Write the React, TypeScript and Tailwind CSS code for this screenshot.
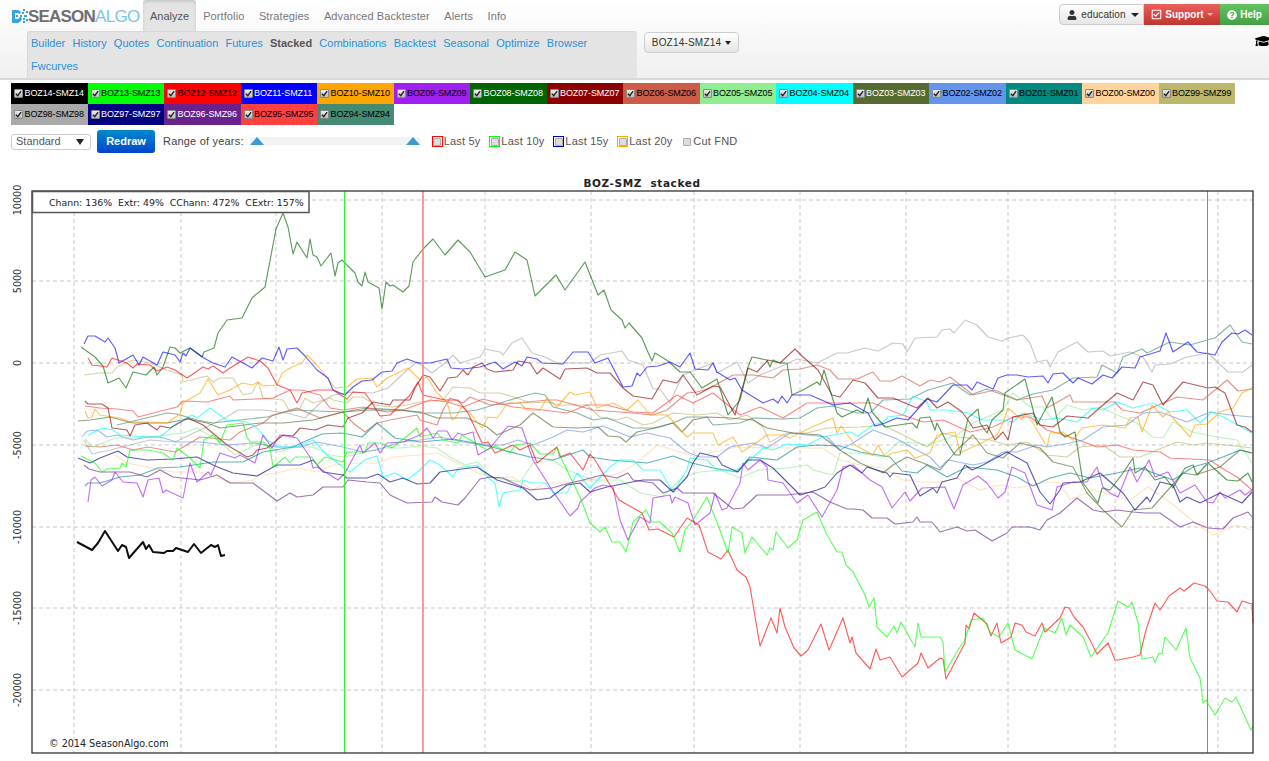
import React from 'react';
import { FaUser, FaRegCheckSquare, FaQuestionCircle, FaGraduationCap } from 'react-icons/fa';

const mainTabs = ['Portfolio', 'Strategies', 'Advanced Backtester', 'Alerts', 'Info'];
const subLinks = ['Builder', 'History', 'Quotes', 'Continuation', 'Futures', 'Stacked', 'Combinations', 'Backtest', 'Seasonal', 'Optimize', 'Browser', 'Fwcurves'];

const legend = [
  { name: 'BOZ14-SMZ14', bg: 'bg-[#000000]', text: 'text-white' },
  { name: 'BOZ13-SMZ13', bg: 'bg-[#00ff00]', text: 'text-black' },
  { name: 'BOZ12-SMZ12', bg: 'bg-[#ff0000]', text: 'text-black' },
  { name: 'BOZ11-SMZ11', bg: 'bg-[#0000ff]', text: 'text-white' },
  { name: 'BOZ10-SMZ10', bg: 'bg-[#ffa500]', text: 'text-black' },
  { name: 'BOZ09-SMZ09', bg: 'bg-[#a020f0]', text: 'text-black' },
  { name: 'BOZ08-SMZ08', bg: 'bg-[#006400]', text: 'text-white' },
  { name: 'BOZ07-SMZ07', bg: 'bg-[#8b0000]', text: 'text-white' },
  { name: 'BOZ06-SMZ06', bg: 'bg-[#cd5b45]', text: 'text-black' },
  { name: 'BOZ05-SMZ05', bg: 'bg-[#90ee90]', text: 'text-black' },
  { name: 'BOZ04-SMZ04', bg: 'bg-[#00ffff]', text: 'text-black' },
  { name: 'BOZ03-SMZ03', bg: 'bg-[#556b2f]', text: 'text-white' },
  { name: 'BOZ02-SMZ02', bg: 'bg-[#6495ed]', text: 'text-black' },
  { name: 'BOZ01-SMZ01', bg: 'bg-[#008b80]', text: 'text-black' },
  { name: 'BOZ00-SMZ00', bg: 'bg-[#ffd39b]', text: 'text-black' },
  { name: 'BOZ99-SMZ99', bg: 'bg-[#bdb76b]', text: 'text-black' },
  { name: 'BOZ98-SMZ98', bg: 'bg-[#a9a9a9]', text: 'text-black' },
  { name: 'BOZ97-SMZ97', bg: 'bg-[#000080]', text: 'text-white' },
  { name: 'BOZ96-SMZ96', bg: 'bg-[#68228b]', text: 'text-white' },
  { name: 'BOZ95-SMZ95', bg: 'bg-[#ff4040]', text: 'text-black' },
  { name: 'BOZ94-SMZ94', bg: 'bg-[#458b74]', text: 'text-black' },
];

const periods = [
  { label: 'Last 5y', box: 'border-[#ff0000]' },
  { label: 'Last 10y', box: 'border-[#00ff00]' },
  { label: 'Last 15y', box: 'border-[#0000cc]' },
  { label: 'Last 20y', box: 'border-[#ffa500]' },
  { label: 'Cut FND', box: 'border-transparent' },
];

const gridY = [200, 281, 363, 445, 527, 608, 690];
const gridX = [74, 181, 276, 382, 485, 591, 694, 800, 906, 1008, 1115, 1218];
const yLabels = [
  { v: '10000', y: 200 }, { v: '5000', y: 281 }, { v: '0', y: 363 }, { v: '-5000', y: 445 },
  { v: '-10000', y: 527 }, { v: '-15000', y: 608 }, { v: '-20000', y: 690 },
];

// traced by eye from the plot, absolute page coords
const series: { color: string; width?: number; pts: string }[] = [
  { color: '#ffd39b', pts: '115,455 127,463 147,467 173,472 200,472 217,478 233,483 253,480 260,475 277,473 297,468 317,472 333,465 363,463 377,463 393,457 420,455 437,453 457,463 478,473 495,478 513,477 533,490 545,483 567,483 590,480 620,473 637,463 657,445 680,452 697,457 713,452 737,447 767,448 787,448 823,448 840,460 860,465 883,468 903,480 923,482 940,482 957,478 980,490 1000,485 1017,488 1047,482 1060,483 1070,500 1093,490 1130,500 1148,487 1167,500 1180,510 1195,523 1213,535 1237,525 1252,530' },
  { color: '#a9a9a9', pts: '84,440 92,454 110,450 130,445 150,440 175,442 200,430 225,418 238,410 263,410 287,413 305,418 320,403 333,395 353,392 373,393 388,388 407,370 417,362 432,373 445,363 453,355 460,363 480,357 485,349 500,352 503,355 512,343 522,338 532,353 545,357 557,363 590,363 600,355 622,351 628,360 643,365 653,389 660,389 670,403 677,387 683,375 713,363 717,373 737,362 748,383 760,375 780,367 797,359 817,363 837,353 847,353 865,348 878,351 893,343 903,344 907,352 915,338 937,337 942,330 950,329 954,333 965,320 977,325 988,337 1002,341 1008,338 1023,335 1030,343 1037,362 1047,360 1050,367 1058,352 1077,342 1088,352 1103,351 1110,356 1130,352 1143,357 1152,372 1155,365 1170,364 1187,357 1208,353 1228,372 1243,372 1252,365' },
  { color: '#bdb76b', pts: '84,375 100,373 112,373 117,367 133,360 150,363 167,370 182,375 183,382 207,376 213,382 220,378 233,378 243,395 252,393 258,382 263,398 283,400 290,412 300,408 305,398 313,403 330,398 333,400 347,403 353,397 363,397 375,405 392,407 407,405 420,402 443,400 453,387 470,388 480,393 500,393 517,398 530,403 547,402 560,405 587,405 600,417 617,420 627,417 643,425 653,423 673,413 697,415 717,413 730,420 747,415 763,427 770,442 787,433 807,433 827,428 860,427 883,425 907,437 927,447 943,433 957,437 990,440 1007,445 1027,442 1047,455 1067,457 1080,447 1103,445 1120,457 1140,457 1157,450 1177,442 1193,445 1207,443 1252,448' },
  { color: '#458b74', pts: '117,425 167,413 177,414 197,420 213,423 267,417 293,410 343,412 367,408 400,410 420,413 453,413 477,410 520,397 535,393 545,395 553,407 577,413 593,420 607,418 633,428 653,428 673,423 687,417 707,417 713,425 740,423 753,418 783,419 800,418 817,408 833,406 857,413 870,413 883,400 910,399 928,390 953,383 970,395 987,389 1017,400 1033,394 1053,390 1073,378 1097,377 1102,365 1117,373 1123,357 1142,349 1147,353 1170,342 1190,345 1207,340 1215,338 1230,325 1242,342 1252,344' },
  { color: '#cd5b45', pts: '85,446 100,447 117,445 133,450 148,447 175,452 200,437 230,440 240,432 263,423 273,415 297,408 320,418 343,412 353,423 365,432 377,423 390,420 417,415 420,420 437,425 443,410 450,398 463,403 470,397 490,405 517,403 548,400 557,400 593,410 633,413 653,415 667,410 687,393 697,392 710,388 733,375 753,375 773,378 783,370 800,369 817,365 830,370 838,379 857,379 873,372 880,381 892,381 902,376 920,386 930,380 940,382 950,377 973,395 995,390 1017,400 1042,396 1047,408 1070,395 1073,402 1115,402 1122,410 1140,413 1177,397 1203,400 1227,380 1238,391 1252,389' },
  { color: '#ff4040', pts: '85,406 100,408 117,409 133,411 138,417 157,412 177,407 183,401 207,402 230,396 233,400 257,399 273,398 290,390 302,390 320,395 330,408 343,410 363,407 387,412 403,410 430,400 448,402 463,407 483,399 513,407 543,410 567,413 587,405 607,405 633,412 653,413 677,395 693,403 713,393 740,415 760,407 783,418 807,403 837,403 873,403 897,413 923,422 943,420 970,432 993,427 1013,417 1030,417 1047,430 1073,438 1097,447 1117,445 1133,450 1160,452 1170,458 1210,460 1220,467 1237,477 1252,490' },
  { color: '#90ee90', pts: '85,439 93,447 115,438 133,438 147,437 167,435 183,433 197,428 220,442 235,455 260,443 280,452 293,447 313,447 330,455 343,457 363,453 380,448 400,448 420,446 437,448 450,457 465,465 478,462 490,477 520,482 533,463 553,460 567,470 593,480 620,480 640,493 662,497 683,477 700,472 720,470 740,478 758,470 787,468 807,465 813,470 833,475 840,453 857,453 883,457 898,442 917,443 928,445 957,435 973,423 1003,410 1013,393 1030,407 1043,407 1053,420 1067,405 1083,410 1100,407 1117,415 1137,423 1152,437 1163,438 1173,422 1193,432 1217,437 1237,440 1252,463' },
  { color: '#6495ed', pts: '82,437 87,431 97,430 107,437 117,435 133,440 147,437 160,437 177,442 200,442 227,445 253,443 277,447 300,447 317,442 343,447 363,452 377,450 400,442 420,440 440,437 463,442 483,445 503,445 518,440 533,445 553,437 567,430 583,432 603,426 630,437 647,433 670,438 687,452 700,457 717,457 730,447 753,443 767,448 790,433 807,435 827,437 840,450 853,443 873,430 895,438 913,448 930,457 940,468 948,460 973,465 987,462 1003,452 1017,452 1037,445 1047,447 1070,443 1083,440 1103,427 1127,425 1143,413 1160,412 1187,422 1210,412 1230,415 1252,417' },
  { color: '#008b8b', pts: '85,486 88,483 100,483 120,477 140,475 158,468 180,467 213,462 243,462 263,452 293,447 308,440 322,434 342,433 362,437 377,423 395,438 420,442 453,439 480,444 503,450 530,457 553,460 583,450 590,457 610,460 647,463 673,456 692,463 713,468 737,472 750,457 777,460 797,447 817,445 840,446 860,452 890,457 902,471 917,473 927,465 947,477 967,467 997,470 1017,477 1033,486 1050,478 1070,473 1090,478 1117,473 1140,468 1173,480 1193,467 1207,463 1223,457 1240,450 1252,453' },
  { color: '#556b2f', pts: '78,421 90,420 110,417 133,423 167,423 187,419 207,423 220,428 260,423 283,423 313,420 343,412 367,410 400,410 420,412 437,418 467,418 487,427 497,435 520,425 533,413 553,427 577,428 598,427 608,436 620,437 626,442 637,432 660,427 673,423 682,432 693,420 707,417 730,418 753,420 767,428 793,433 820,435 840,450 860,463 883,473 893,465 907,457 923,463 940,470 957,450 973,435 987,453 1003,458 1020,443 1040,448 1053,462 1073,467 1087,493 1103,510 1122,527 1133,510 1152,508 1183,473 1195,475 1220,467 1240,450 1252,453' },
  { color: '#00ffff', pts: '88,435 102,428 113,430 120,435 147,437 160,437 177,423 192,415 197,418 210,408 227,420 247,422 257,428 267,440 278,447 297,447 313,440 327,455 343,467 350,472 365,460 377,456 383,477 395,473 407,480 420,470 430,460 440,465 453,477 458,468 478,465 488,478 495,483 499,507 503,493 520,490 523,480 532,483 545,483 553,493 567,493 577,473 590,488 610,467 620,460 633,460 643,470 660,470 673,492 687,470 690,458 707,460 717,470 737,470 750,460 763,448 773,450 787,444 807,445 823,437 850,432 858,436 873,425 883,422 888,417 903,415 913,396 927,402 930,410 947,410 968,413 982,420 1003,420 1013,422 1023,413 1043,420 1057,418 1077,422 1093,408 1103,410 1117,402 1133,408 1153,403 1170,412 1187,410 1200,423 1212,412 1223,417 1238,425 1252,433' },
  { color: '#000080', pts: '78,458 90,463 100,458 118,451 127,457 147,460 173,459 197,457 213,465 220,468 233,473 257,476 277,465 300,465 313,460 323,472 343,475 347,478 367,478 378,474 390,482 403,478 417,484 430,483 440,472 477,467 497,480 510,484 523,488 537,500 550,498 567,485 580,483 590,492 607,487 627,483 643,480 660,480 673,492 687,477 693,463 700,453 717,457 722,465 738,472 748,460 760,460 773,468 800,495 817,490 825,487 837,473 850,465 862,473 867,467 887,473 890,477 893,473 910,475 920,496 933,488 937,493 942,482 957,478 965,465 972,470 983,465 1007,452 1027,463 1040,492 1050,504 1060,490 1063,483 1080,482 1100,473 1123,493 1135,510 1147,497 1150,502 1160,482 1173,485 1180,502 1187,497 1200,503 1220,493 1242,503 1252,492' },
  { color: '#68228b', pts: '84,465 89,469 100,472 130,472 147,477 160,470 173,477 200,480 217,475 230,483 253,483 277,501 290,493 297,497 313,495 323,487 343,487 348,480 367,482 380,483 390,495 407,503 432,502 435,497 442,502 458,505 465,498 480,479 490,477 503,478 513,483 530,490 552,488 570,483 583,480 602,475 617,478 628,473 633,480 653,483 663,493 677,488 683,493 713,493 733,509 743,508 757,495 787,495 813,492 830,502 847,509 853,509 863,510 872,518 887,518 895,524 913,522 917,517 920,522 932,522 940,532 957,527 967,531 975,530 992,541 1007,533 1012,527 1030,527 1040,530 1047,520 1060,513 1077,498 1093,510 1103,512 1117,510 1133,512 1145,513 1160,513 1180,527 1193,522 1208,528 1223,529 1233,518 1248,512 1252,517' },
  { color: '#ffa500', pts: '85,411 88,418 92,417 95,409 100,415 120,418 130,422 147,422 167,423 180,414 183,403 200,393 208,379 218,395 230,390 242,383 253,385 258,382 263,386 277,385 282,373 292,367 302,363 307,355 317,365 325,375 335,388 347,387 357,379 372,378 377,387 387,378 408,368 420,380 427,377 437,393 447,402 452,420 455,418 462,407 470,413 482,428 488,417 497,418 508,403 520,403 527,410 540,410 547,398 557,407 570,392 575,395 590,392 597,408 613,403 627,410 638,400 650,415 667,415 687,437 693,433 713,433 718,445 733,437 742,452 757,442 767,435 783,435 790,438 810,428 833,418 837,433 841,426 855,445 873,455 878,445 885,457 893,453 907,450 915,458 930,453 937,435 955,432 960,453 983,442 997,435 1003,423 1008,408 1022,420 1025,413 1033,423 1047,447 1050,433 1063,432 1073,440 1082,428 1103,425 1125,428 1130,418 1138,417 1142,432 1152,405 1163,417 1168,412 1173,418 1190,437 1195,425 1207,424 1220,412 1233,408 1242,393 1252,388' },
  { color: '#a020f0', pts: '88,502 91,480 95,477 102,486 112,480 115,472 123,482 137,483 143,497 148,480 159,478 163,493 166,490 183,498 190,463 197,482 208,472 211,475 220,453 235,458 240,455 255,463 263,435 272,448 280,435 297,438 310,457 313,468 317,467 338,480 345,473 360,445 363,453 375,443 380,453 387,443 403,442 420,435 427,428 433,438 438,431 447,431 452,440 458,433 463,435 473,432 478,455 490,448 508,426 522,428 533,460 552,490 570,516 578,508 580,502 595,488 603,485 613,487 620,520 628,540 640,517 650,523 653,498 670,495 672,503 675,497 688,503 695,525 710,513 715,493 722,510 727,508 740,483 743,463 748,470 760,460 767,467 768,480 783,483 797,503 808,495 822,517 837,490 843,467 853,465 862,473 870,480 882,487 892,508 905,492 910,501 922,488 945,487 954,509 963,485 978,476 987,483 998,498 1005,492 1012,467 1025,473 1037,505 1052,510 1057,487 1073,482 1087,482 1097,467 1103,487 1110,493 1118,497 1130,467 1137,482 1149,460 1155,477 1168,472 1180,493 1195,485 1207,502 1213,503 1220,492 1225,498 1240,490 1245,495 1252,490' },
  { color: '#8b0000', pts: '85,401 88,404 102,404 108,408 112,428 127,430 130,436 135,425 147,423 157,430 160,426 170,428 188,418 203,425 227,445 247,457 253,455 257,450 267,448 283,435 293,436 300,428 315,430 328,425 343,427 348,418 362,413 373,402 390,405 393,400 410,400 415,388 423,375 430,377 440,391 448,378 457,377 463,370 468,375 473,367 482,363 487,369 495,372 513,370 518,361 530,363 537,374 543,368 560,379 565,369 587,368 597,373 610,373 623,388 633,396 652,399 663,380 677,383 683,375 697,395 713,386 720,387 735,415 748,368 757,372 768,360 780,363 795,349 803,357 818,370 832,395 840,397 853,380 865,383 878,398 893,398 917,408 928,398 937,408 948,402 962,412 968,420 973,428 987,425 995,440 1003,432 1008,440 1013,417 1033,413 1040,425 1053,427 1067,416 1088,418 1103,405 1117,393 1133,400 1143,382 1153,385 1163,405 1183,382 1208,388 1215,387 1225,393 1237,425 1245,427 1252,432' },
  { color: '#006400', pts: '81,347 95,357 103,366 108,383 119,378 126,388 133,372 146,375 154,367 157,375 163,367 170,347 175,348 180,353 190,348 202,357 204,352 214,348 218,333 227,320 242,318 252,298 265,287 276,229 283,213 288,227 293,254 297,242 307,258 310,239 313,255 317,257 321,266 331,253 335,276 338,263 342,260 355,273 358,282 362,286 365,272 368,282 379,288 382,309 386,282 390,286 393,285 403,292 409,286 413,262 423,249 433,239 445,255 458,240 470,252 485,277 505,270 515,252 527,260 535,296 556,275 565,290 585,262 598,295 604,290 611,310 622,320 625,328 629,323 642,338 647,350 652,361 655,353 668,361 680,372 690,372 702,388 717,379 728,415 740,400 748,367 752,357 767,360 770,367 773,360 780,363 787,363 792,395 803,390 817,382 820,385 824,370 837,413 842,417 857,410 863,413 868,398 872,412 885,427 912,423 917,428 920,418 930,417 935,430 937,423 947,443 955,455 960,455 968,418 978,409 980,423 987,433 992,420 1003,410 1005,393 1025,379 1037,425 1052,397 1060,432 1065,437 1075,432 1083,483 1098,503 1102,488 1110,490 1123,473 1133,458 1135,473 1145,467 1155,480 1165,477 1173,488 1185,468 1193,465 1197,475 1208,463 1227,480 1238,481 1248,473 1252,482' },
  { color: '#0000ff', pts: '84,344 88,336 95,336 105,342 108,338 115,348 119,363 133,355 139,365 143,357 157,365 163,352 175,355 180,362 183,353 186,356 190,348 204,358 213,363 225,367 232,357 252,368 262,358 273,361 279,347 283,360 287,349 297,348 305,356 317,370 328,378 333,390 345,395 353,387 362,381 372,380 382,372 392,371 397,363 407,359 418,363 430,363 447,359 451,368 463,369 480,367 495,362 503,369 515,362 522,366 527,357 537,359 542,363 563,364 573,352 588,352 595,363 608,358 623,387 632,386 637,373 640,376 647,367 658,366 670,362 680,367 690,353 695,369 708,370 713,363 717,372 730,380 735,378 742,390 763,403 773,399 778,403 782,396 787,403 792,395 810,395 833,405 850,403 868,413 875,426 885,423 897,418 908,420 927,399 937,402 953,385 967,385 972,390 977,382 993,389 998,378 1007,375 1017,375 1028,377 1043,376 1048,383 1053,374 1063,373 1073,383 1078,378 1092,384 1103,375 1112,378 1122,367 1135,368 1140,357 1160,351 1166,333 1173,352 1188,342 1197,352 1210,354 1215,355 1222,342 1232,333 1238,334 1245,330 1252,335' },
  { color: '#ff0000', pts: '88,358 92,365 100,366 107,367 112,358 127,363 133,368 137,364 150,365 157,371 167,367 175,370 187,378 203,367 208,369 213,366 223,373 230,368 248,357 260,361 268,368 277,385 290,390 297,403 302,393 317,390 333,390 347,399 353,392 365,393 372,403 380,416 390,415 410,395 418,382 423,395 445,400 458,400 468,413 482,443 488,442 495,453 513,445 520,450 530,445 537,463 543,458 557,447 560,457 570,453 583,470 590,454 595,460 619,500 642,513 649,530 658,529 674,537 687,518 699,525 708,552 721,559 728,550 737,570 746,577 750,587 760,646 771,618 777,633 780,608 785,627 794,648 801,656 808,650 821,624 829,650 843,618 850,643 852,637 856,653 870,669 876,649 880,660 890,657 902,677 918,663 921,653 928,668 940,658 943,659 946,679 965,643 966,625 969,629 974,613 987,624 991,636 997,623 1001,643 1011,637 1015,623 1022,625 1026,632 1035,636 1042,623 1045,632 1060,618 1065,607 1069,608 1074,617 1083,627 1090,640 1097,654 1108,643 1115,660 1118,660 1133,657 1140,655 1146,630 1155,603 1160,610 1169,596 1180,588 1184,591 1194,583 1205,586 1210,591 1217,601 1228,602 1237,612 1242,601 1252,604 1253,623' },
  { color: '#00ff00', pts: '81,456 95,463 102,472 107,469 120,468 122,463 126,467 130,450 148,450 163,453 173,460 177,448 190,458 200,468 204,440 213,435 220,443 227,425 243,423 247,437 250,442 263,442 270,448 273,467 285,457 290,463 295,457 312,457 317,465 325,457 343,462 347,452 365,452 368,443 380,443 392,448 417,428 420,437 437,433 443,440 458,443 462,435 487,450 495,446 510,453 515,445 530,443 540,454 553,454 557,447 562,460 580,497 590,523 600,532 605,527 612,542 620,542 626,552 633,522 646,510 652,522 660,522 672,533 680,552 685,530 693,520 707,497 712,510 720,530 728,553 732,527 742,533 745,553 752,537 767,555 770,548 773,550 776,532 788,548 797,540 803,520 817,512 826,533 837,552 842,552 846,565 853,572 865,595 869,607 874,598 877,627 887,637 894,626 897,633 901,622 915,647 918,623 921,637 940,637 943,642 945,672 960,647 965,640 971,620 983,618 990,632 999,637 1008,623 1015,650 1021,653 1032,659 1044,628 1055,633 1062,618 1066,635 1070,625 1083,637 1091,657 1108,633 1118,601 1128,607 1132,602 1138,623 1142,659 1153,657 1155,663 1159,653 1162,654 1165,637 1176,650 1186,628 1190,658 1200,678 1203,703 1206,700 1215,715 1225,698 1232,702 1236,697 1251,730 1253,727' },
  { color: '#000000', width: 2, pts: '77,542 92,550 98,543 105,531 118,551 122,545 126,547 129,558 143,542 146,549 149,545 153,552 164,553 167,551 173,551 176,548 188,552 194,544 201,553 211,545 215,547 218,545 221,556 225,555' },
];

function Plot() {
  return (
    <svg viewBox="0 175 1269 586" className="block w-[1269px] h-[586px]">
      <text x="642" y="187" textAnchor="middle" fontFamily="'DejaVu Sans', sans-serif" fontWeight="700" fontSize="10.5" letterSpacing="0.6" fill="#222" xmlSpace="preserve">BOZ-SMZ  stacked</text>
      <rect x="32" y="191" width="1221" height="562" fill="#fff" />
      {gridY.map((y) => (
        <line key={y} x1="32" x2="1253" y1={y} y2={y} stroke="#c8c8c8" strokeDasharray="4 3" />
      ))}
      {gridX.map((x) => (
        <line key={x} x1={x} x2={x} y1="191" y2="753" stroke="#c8c8c8" strokeDasharray="4 3" />
      ))}
      {series.map((s) => (
        <polyline key={s.color} points={s.pts} fill="none" stroke={s.color} strokeWidth={s.width ?? 1.15} strokeOpacity={s.width ? 0.95 : 0.64} strokeLinejoin="round" />
      ))}
      <line x1="344.5" x2="344.5" y1="191" y2="753" stroke="#33ee33" strokeWidth="1" />
      <line x1="423" x2="423" y1="191" y2="753" stroke="#ff7f7f" strokeWidth="1.6" />
      <line x1="1207.5" x2="1207.5" y1="191" y2="753" stroke="#4aa89c" strokeWidth="1" />
      <rect x="32" y="191" width="1221" height="562" fill="none" stroke="#333" strokeWidth="1.3" />
      <rect x="32.5" y="191.5" width="276.5" height="21" fill="#fff" stroke="#555" strokeWidth="1.5" />
      <text x="49" y="206" fontFamily="'DejaVu Sans', sans-serif" fontSize="9.38" fill="#222" xmlSpace="preserve">Chann: 136%  Extr: 49%  CChann: 472%  CExtr: 157%</text>
      {yLabels.map((l) => (
        <text key={l.v} transform={`translate(21 ${l.y}) rotate(-90)`} textAnchor="middle" fontFamily="'DejaVu Sans', sans-serif" fontSize="9.6" fill="#333">{l.v}</text>
      ))}
      <text x="49" y="747" fontFamily="'DejaVu Sans', sans-serif" fontSize="9.6" fill="#222">© 2014 SeasonAlgo.com</text>
    </svg>
  );
}

function Logo() {
  return (
    <div className="flex items-center w-[143px] pl-3 pt-[1px]">
      <svg viewBox="0 0 16 14" className="w-[16px] h-[14px] shrink-0">
        <path d="M0 1h6l2 1 1 2-2 1-1-1H3v6h3l2-2 2 1-1 3-3 2H0z" fill="#35a3e0" />
        <path d="M4 6h2v2H4zM8 6h2v2H8zM10 3h2v2h-2zM11 0h2v2h-2zM14 2h2v2h-2zM12 6h3v2h-3zM11 9h2v2h-2zM14 10h2v2h-2zM11 12h2v2h-2z" fill="#35a3e0" />
      </svg>
      <span className="text-[17px] font-bold leading-none tracking-[-0.8px] text-[#6f6f6f]">SEASON</span>
      <span className="text-[17px] leading-none tracking-[-0.7px] text-[#7cc5ea]">ALGO</span>
    </div>
  );
}

export default function App() {
  return (
    <div className="w-[1269px] h-[761px] overflow-hidden bg-white text-[11px] text-[#444] font-['Liberation_Sans',Arial,sans-serif]">
      <header className="h-[78px] border-b-2 border-[#d8d8d8] bg-gradient-to-b from-white to-[#f0f0f0] box-content">
        <div className="flex h-[31px]">
          <Logo />
          <a className="flex items-center px-[7px] pt-[1px] bg-[#e4e4e4] rounded-t-[3px] shadow-[inset_0_2px_3px_rgba(0,0,0,0.12)] text-[#555]">Analyze</a>
          <nav className="flex items-center pt-[1px] ml-[7px] gap-[14.5px] tracking-[0.1px] text-[#777]">
            {mainTabs.map((t) => (
              <a key={t}>{t}</a>
            ))}
          </nav>
          <div className="ml-auto flex items-start pt-1">
            <button className="flex items-center gap-[4px] h-[21px] w-[85px] justify-center pl-[3px] border border-[#ccc] rounded-l-[4px] bg-gradient-to-b from-white to-[#e6e6e6] text-[#333] text-[10px] tracking-[0.1px]">
              <FaUser className="w-[10px] h-[10px]" /> education <span className="ml-[1px] border-x-[4px] border-x-transparent border-t-[4px] border-t-[#222]" />
            </button>
            <button className="flex items-center gap-[3px] h-[21px] w-[76px] justify-center bg-gradient-to-b from-[#ee5f5b] to-[#bd362f] text-white font-bold text-[10px]">
              <FaRegCheckSquare className="w-[11px] h-[11px]" /> Support <span className="border-x-[3px] border-x-transparent border-t-[3px] border-t-[#f0b0b0]" />
            </button>
            <button className="flex items-center gap-[3px] h-[21px] w-[49px] justify-center bg-gradient-to-b from-[#62c462] to-[#45a045] text-white font-bold text-[10px]">
              <FaQuestionCircle className="w-[10px] h-[10px]" /> Help
            </button>
          </div>
        </div>
        <div className="flex items-start pl-[27px]">
          <div className="w-[610px] h-[47px] bg-[#e4e4e4] rounded-t-[3px] pl-1 flex flex-wrap gap-x-[7.2px] content-start shadow-[inset_1px_1px_1px_rgba(0,0,0,0.06)]">
            {subLinks.map((l) => (
              <a key={l} className={l === 'Stacked' ? 'h-[23px] leading-[24px] font-bold text-[#555]' : 'h-[23px] leading-[24px] text-[#2a8fd6]'}>{l}</a>
            ))}
          </div>
          <button className="ml-[7px] mt-[1px] flex items-center gap-[4px] h-[21px] w-[95px] justify-center border border-[#ccc] rounded-[4px] bg-gradient-to-b from-white to-[#e6e6e6] text-[#333] text-[10px] tracking-[0.2px]">
            BOZ14-SMZ14 <span className="border-x-[3.5px] border-x-transparent border-t-[4px] border-t-[#222]" />
          </button>
          <div className="ml-auto w-[14px] h-[14px] mt-[3px] overflow-hidden">
            <FaGraduationCap className="w-[17px] h-[14px] max-w-none text-black" />
          </div>
        </div>
      </header>

      <div className="mt-[3px] ml-[11px] flex flex-wrap w-[1230px]">
        {legend.map((item) => (
          <label key={item.name} className={`${item.bg} ${item.text} flex items-center gap-[1.5px] w-[76.5px] h-[21px] pl-[3px] text-[9px] tracking-[-0.1px] whitespace-nowrap overflow-hidden`}>
            <span className="flex items-center justify-center w-[9px] h-[9px] shrink-0 rounded-[1px] border border-[#888] bg-gradient-to-b from-[#eee] to-[#bbb]">
              <svg viewBox="0 0 8 8" className="w-[7px] h-[7px]">
                <path d="M1 4.2 3.2 6.5 7 1.2" fill="none" stroke="#222" strokeWidth="1.6" />
              </svg>
            </span>
            {item.name}
          </label>
        ))}
      </div>

      <div className="flex items-center h-[23px] mt-[5px] pl-[11px]">
        <div className="flex items-center justify-between w-[80px] h-[16px] border border-[#ccc] rounded-[3px] pl-[4px] pr-[6px] text-[#555]">
          Standard <span className="border-x-[4px] border-x-transparent border-t-[6px] border-t-[#222]" />
        </div>
        <button className="ml-[6px] w-[58px] h-[23px] rounded-[3px] bg-gradient-to-b from-[#0088cc] to-[#0044cc] text-white font-bold text-[11px]">Redraw</button>
        <span className="ml-[8px] -mt-[1px] tracking-[0.2px] text-[#444]">Range of years:</span>
        <div className="relative ml-[6px] w-[170px] h-[8px] bg-[#f3f3f3] -mt-[1px]">
          <span className="absolute left-0 top-0 border-x-[7px] border-x-transparent border-b-[8px] border-b-[#3c9bd0]" />
          <span className="absolute right-0 top-0 border-x-[7px] border-x-transparent border-b-[8px] border-b-[#3c9bd0]" />
        </div>
        <div className="flex items-center ml-[12px] gap-[8.8px]">
          {periods.map((p) => (
            <label key={p.label} className="flex items-center gap-[1px] tracking-[0.2px] text-[#555]">
              <span className={`${p.box} flex items-center justify-center w-[9px] h-[9px] border-[1.5px] box-content`}>
                <span className="w-[8px] h-[8px] rounded-[1px] bg-[#ddd] border border-[#aaa]" />
              </span>
              {p.label}
            </label>
          ))}
        </div>
      </div>

      <div className="mt-[22px]">
        <Plot />
      </div>
    </div>
  );
}
